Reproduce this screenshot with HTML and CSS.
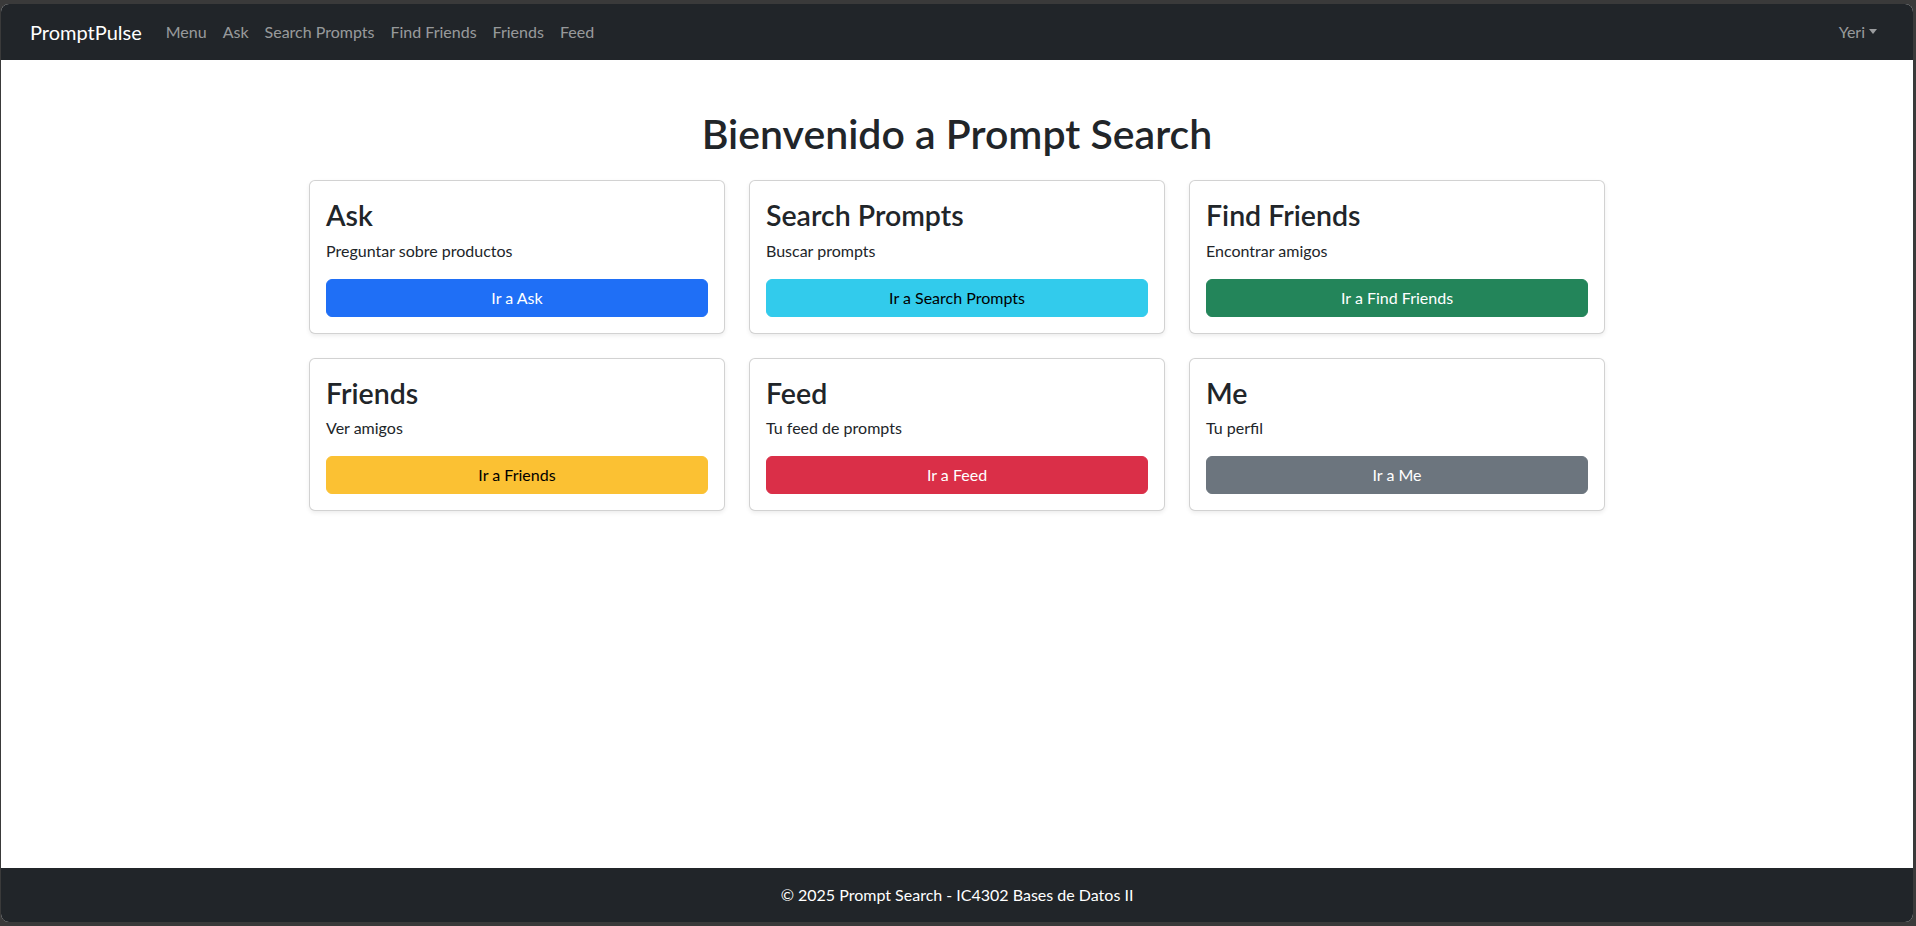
FILE: index.html
```html
<!DOCTYPE html>
<html lang="es">
<head>
<meta charset="utf-8">
<title>Prompt Search</title>
<link rel="stylesheet" href="styles.css">
</head>
<body>
<div class="window">
  <nav class="navbar">
    <a class="brand" href="#">PromptPulse</a>
    <ul class="nav">
      <li><a class="nav-link" href="#">Menu</a></li>
      <li><a class="nav-link" href="#">Ask</a></li>
      <li><a class="nav-link" href="#">Search Prompts</a></li>
      <li><a class="nav-link" href="#">Find Friends</a></li>
      <li><a class="nav-link" href="#">Friends</a></li>
      <li><a class="nav-link" href="#">Feed</a></li>
    </ul>
    <a class="nav-link user" href="#">Yeri<span class="caret"></span></a>
  </nav>
  <main class="main">
    <div class="container">
      <h1 class="title">Bienvenido a Prompt Search</h1>
      <div class="grid">
        <div class="card">
          <h3 class="card-title">Ask</h3>
          <p class="card-text">Preguntar sobre productos</p>
          <a class="btn btn-primary" href="#">Ir a Ask</a>
        </div>
        <div class="card">
          <h3 class="card-title">Search Prompts</h3>
          <p class="card-text">Buscar prompts</p>
          <a class="btn btn-info" href="#">Ir a Search Prompts</a>
        </div>
        <div class="card">
          <h3 class="card-title">Find Friends</h3>
          <p class="card-text">Encontrar amigos</p>
          <a class="btn btn-success" href="#">Ir a Find Friends</a>
        </div>
        <div class="card">
          <h3 class="card-title">Friends</h3>
          <p class="card-text">Ver amigos</p>
          <a class="btn btn-warning" href="#">Ir a Friends</a>
        </div>
        <div class="card">
          <h3 class="card-title">Feed</h3>
          <p class="card-text">Tu feed de prompts</p>
          <a class="btn btn-danger" href="#">Ir a Feed</a>
        </div>
        <div class="card">
          <h3 class="card-title">Me</h3>
          <p class="card-text">Tu perfil</p>
          <a class="btn btn-secondary" href="#">Ir a Me</a>
        </div>
      </div>
    </div>
  </main>
  <footer class="footer">© 2025 Prompt Search - IC4302 Bases de Datos II</footer>
</div>
</body>
</html>
```
FILE: styles.css
```css
* { box-sizing: border-box; }
html, body { height: 100%; }
body {
  margin: 0;
  background: #3a3a3a;
  font-family: "Segoe UI", Lato, "Noto Sans", sans-serif;
  font-size: 16px;
  line-height: 1.5;
  color: #212529;
}
.window {
  margin: 4px 3px 4px 1px;
  height: calc(100% - 8px);
  border-radius: 8px;
  overflow: hidden;
  background: #fff;
  display: flex;
  flex-direction: column;
}
.navbar {
  height: 56px;
  flex: none;
  background: #212529;
  display: flex;
  align-items: center;
  padding: 0 28px 0 28px;
}
.brand {
  color: #fff;
  font-size: 20px;
  line-height: 30px;
  text-decoration: none;
  margin-right: 16px;
  margin-left: 1px;
}
.nav {
  list-style: none;
  margin: 0;
  padding: 0;
  display: flex;
}
.nav-link {
  display: block;
  padding: 8px;
  color: rgba(255, 255, 255, 0.55);
  text-decoration: none;
  line-height: 24px;
}
.user { margin-left: auto; }
.caret {
  display: inline-block;
  margin-left: 4px;
  vertical-align: 4px;
  border-top: 5px solid;
  border-left: 4.5px solid transparent;
  border-right: 4.5px solid transparent;
}
.main { flex: 1; }
.container {
  max-width: 1320px;
  margin: 48px auto 0;
  padding: 0 12px;
}
.title {
  margin: 0 0 22px;
  padding-top: 2px;
  text-align: center;
  font-size: 41px;
  font-weight: 600;
  line-height: 48px;
}
.grid {
  display: grid;
  grid-template-columns: repeat(3, 1fr);
  gap: 24px;
}
.card {
  border: 1px solid rgba(0, 0, 0, 0.175);
  border-radius: 6px;
  padding: 16px;
  box-shadow: 0 2px 4px rgba(0, 0, 0, 0.075);
  background: #fff;
}
.card-title {
  margin: 0 0 6px;
  padding-top: 2px;
  font-size: 28.5px;
  font-weight: 600;
  line-height: 33.6px;
}
.card-text { margin: 0 0 16px; }
.btn {
  display: block;
  width: 100%;
  padding: 6px 12px;
  border: 1px solid transparent;
  border-radius: 6px;
  text-align: center;
  text-decoration: none;
  line-height: 24px;
  color: #fff;
}
.btn-primary { background: #1f6ff6; border-color: #1f6ff6; }
.btn-info { background: #32cbec; border-color: #32cbec; color: #000; }
.btn-success { background: #23855a; border-color: #23855a; }
.btn-warning { background: #fbc133; border-color: #fbc133; color: #000; }
.btn-danger { background: #da2f48; border-color: #da2f48; }
.btn-secondary { background: #6c757e; border-color: #6c757e; }
.footer {
  flex: none;
  height: 54px;
  background: #212529;
  color: #fff;
  display: flex;
  align-items: center;
  justify-content: center;
}
```
